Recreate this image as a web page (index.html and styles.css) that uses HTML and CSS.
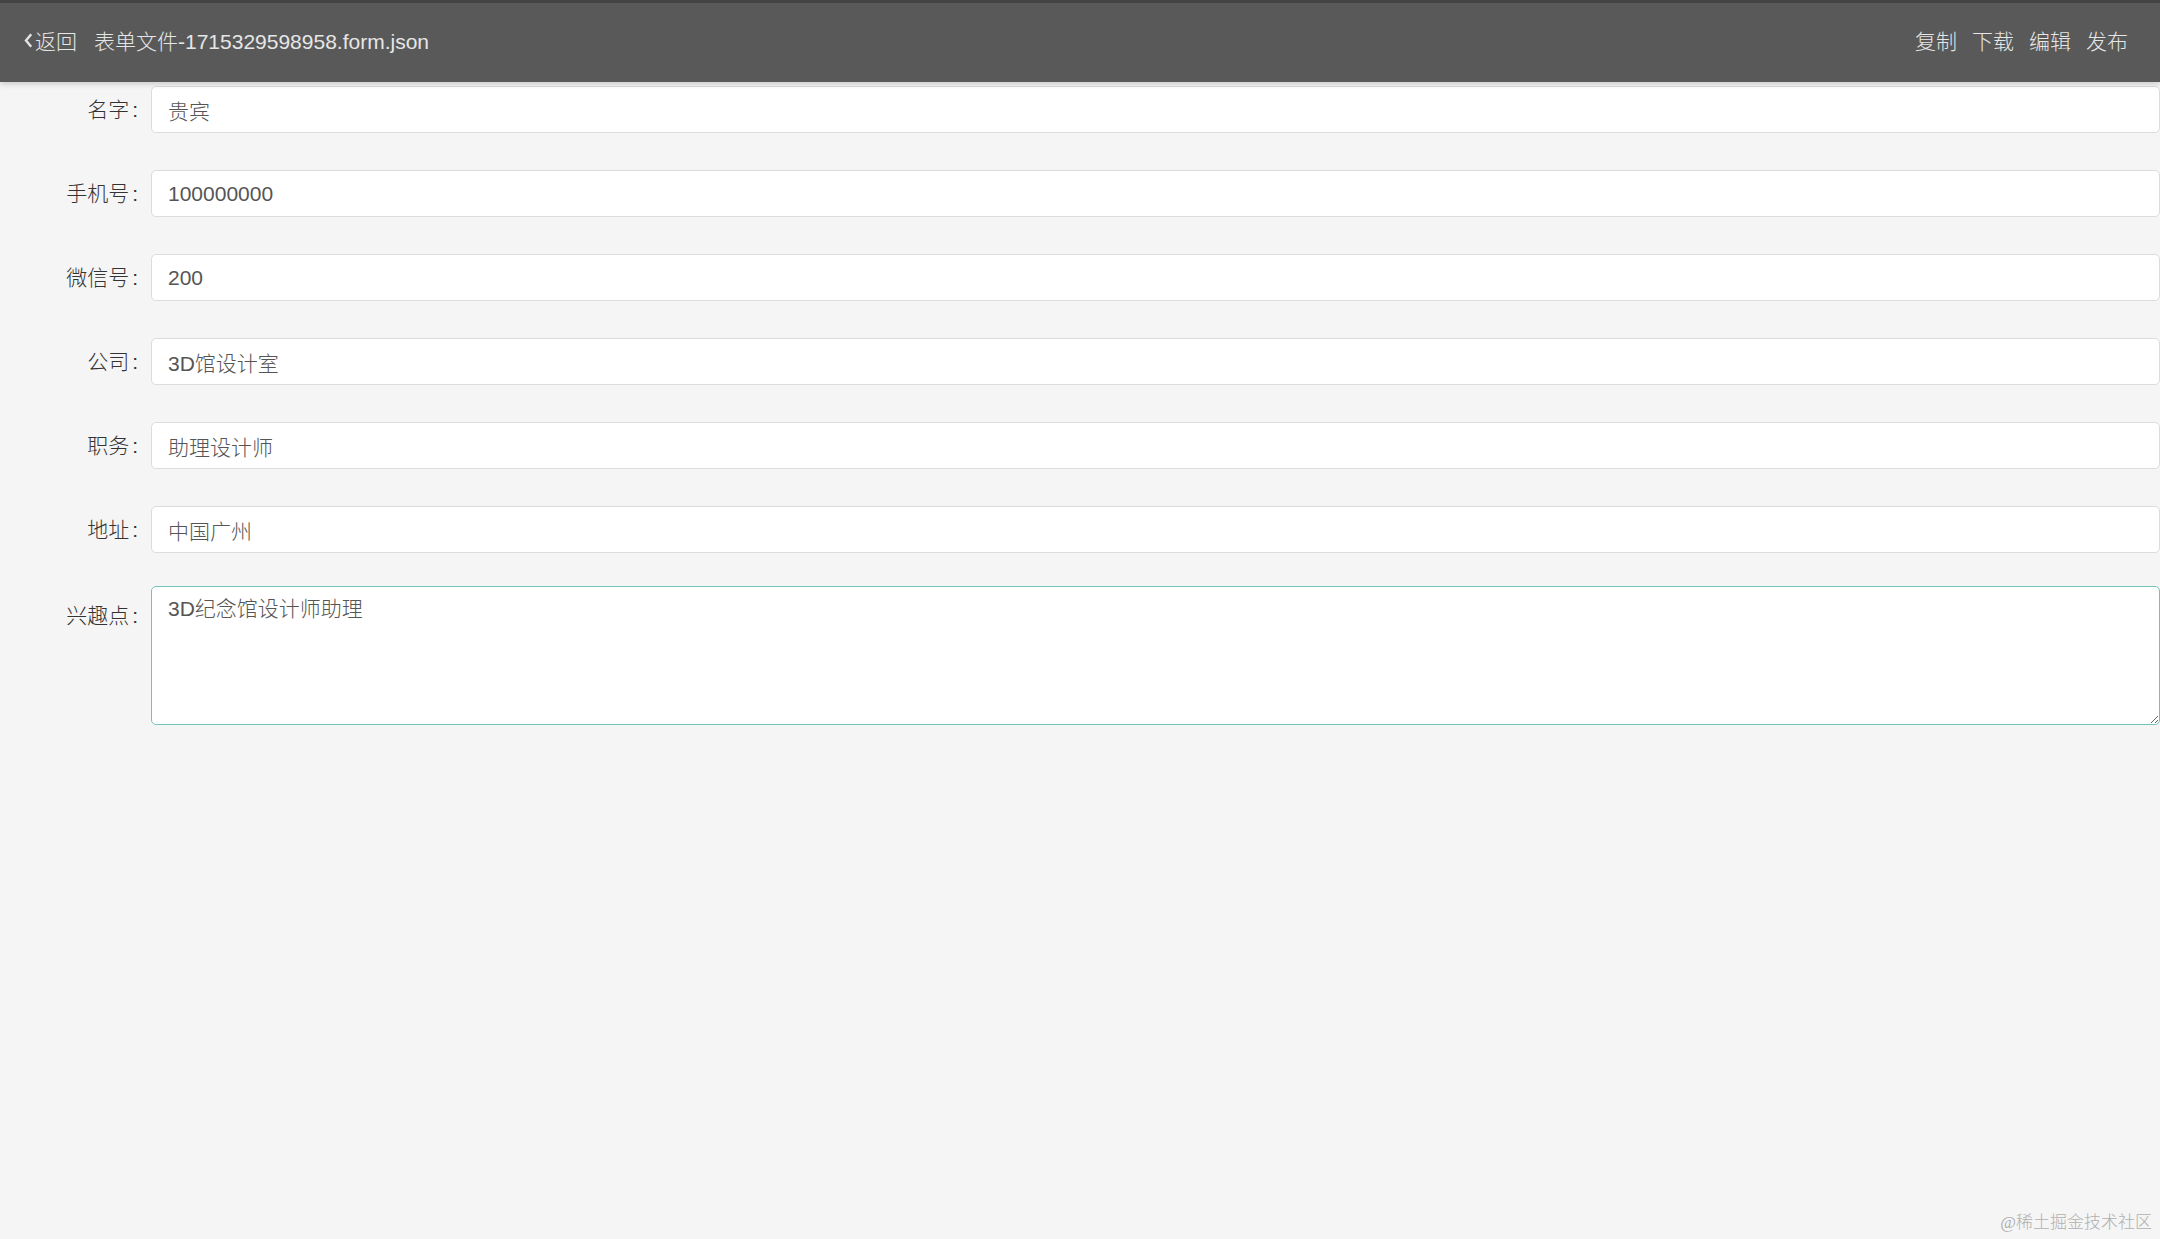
FILE: index.html
```html
<!DOCTYPE html>
<html lang="zh-CN">
<head>
<meta charset="utf-8">
<title>表单文件</title>
<link rel="stylesheet" href="styles.css">
</head>
<body>
<header class="topbar">
  <div class="topbar-left">
    <a class="back">
      <svg class="back-icon" width="9" height="15" viewBox="0 0 9 15"><path d="M7.2 1.2 L2 7.5 L7.2 13.8" fill="none" stroke="#e4e4e4" stroke-width="2.4"/></svg>
      <span>返回</span>
    </a>
    <span class="title">表单文件-1715329598958.form.json</span>
  </div>
  <nav class="actions">
    <a class="action">复制</a>
    <a class="action">下载</a>
    <a class="action">编辑</a>
    <a class="action">发布</a>
  </nav>
</header>
<main class="form">
  <div class="row"><label class="label">名字<span class="colon">:</span></label><input class="field" value="贵宾"></div>
  <div class="row"><label class="label">手机号<span class="colon">:</span></label><input class="field" value="100000000"></div>
  <div class="row"><label class="label">微信号<span class="colon">:</span></label><input class="field" value="200"></div>
  <div class="row"><label class="label">公司<span class="colon">:</span></label><input class="field" value="3D馆设计室"></div>
  <div class="row"><label class="label">职务<span class="colon">:</span></label><input class="field" value="助理设计师"></div>
  <div class="row"><label class="label">地址<span class="colon">:</span></label><input class="field" value="中国广州"></div>
  <div class="row row-area"><label class="label label-area">兴趣点<span class="colon">:</span></label><textarea class="area">3D纪念馆设计师助理</textarea></div>
</main>
<div class="watermark">@稀土掘金技术社区</div>
</body>
</html>
```
FILE: styles.css
```css
html, body {
  margin: 0;
  padding: 0;
  background: #f5f5f5;
  font-family: "Liberation Sans", "Noto Sans CJK SC", sans-serif;
  font-size: 21px;
  font-weight: 300;
  height: 100%;
  overflow: hidden;
}
.topbar {
  height: 74px;
  padding-bottom: 5px;
  border-top: 3px solid #444444;
  background: #595959;
  display: flex;
  align-items: center;
  justify-content: space-between;
  color: #e6e6e6;
  box-shadow: 0 2px 6px rgba(0,0,0,0.18);
  position: relative;
  z-index: 1;
}
.topbar-left {
  display: flex;
  align-items: center;
  padding-left: 24px;
}
.back {
  display: flex;
  align-items: center;
  gap: 2px;
  margin-right: 17px;
}
.back-icon { display: block; }
.actions {
  display: flex;
  gap: 15px;
  padding-right: 32px;
}
.form {
  padding-top: 4px;
}
.row {
  display: flex;
  align-items: flex-start;
  margin-bottom: 37px;
}
.row-area {
  margin-top: -4px;
}
.label {
  width: 138px;
  flex: none;
  text-align: right;
  line-height: 47px;
  color: #333333;
  margin-right: 13px;
}
.colon {
  margin-left: 3px;
}
.label-area {
  line-height: 60px;
}
.field {
  flex: 1;
  min-width: 0;
  height: 47px;
  box-sizing: border-box;
  border: 1px solid #dcdcdc;
  border-radius: 5px;
  background: #ffffff;
  padding: 0 16px;
  font: inherit;
  color: #555555;
  outline: none;
  margin: 0;
}
.area {
  flex: 1;
  min-width: 0;
  height: 139px;
  box-sizing: border-box;
  border: 1px solid #72c4ba;
  border-radius: 5px;
  background: #ffffff;
  padding: 8px 16px;
  font: inherit;
  line-height: 27px;
  color: #555555;
  outline: none;
  margin: 0;
}
.watermark {
  position: absolute;
  right: 8px;
  bottom: 6px;
  font-family: "Liberation Serif", "Noto Sans CJK SC", serif;
  font-size: 17px;
  color: #b0b0b0;
}
```
